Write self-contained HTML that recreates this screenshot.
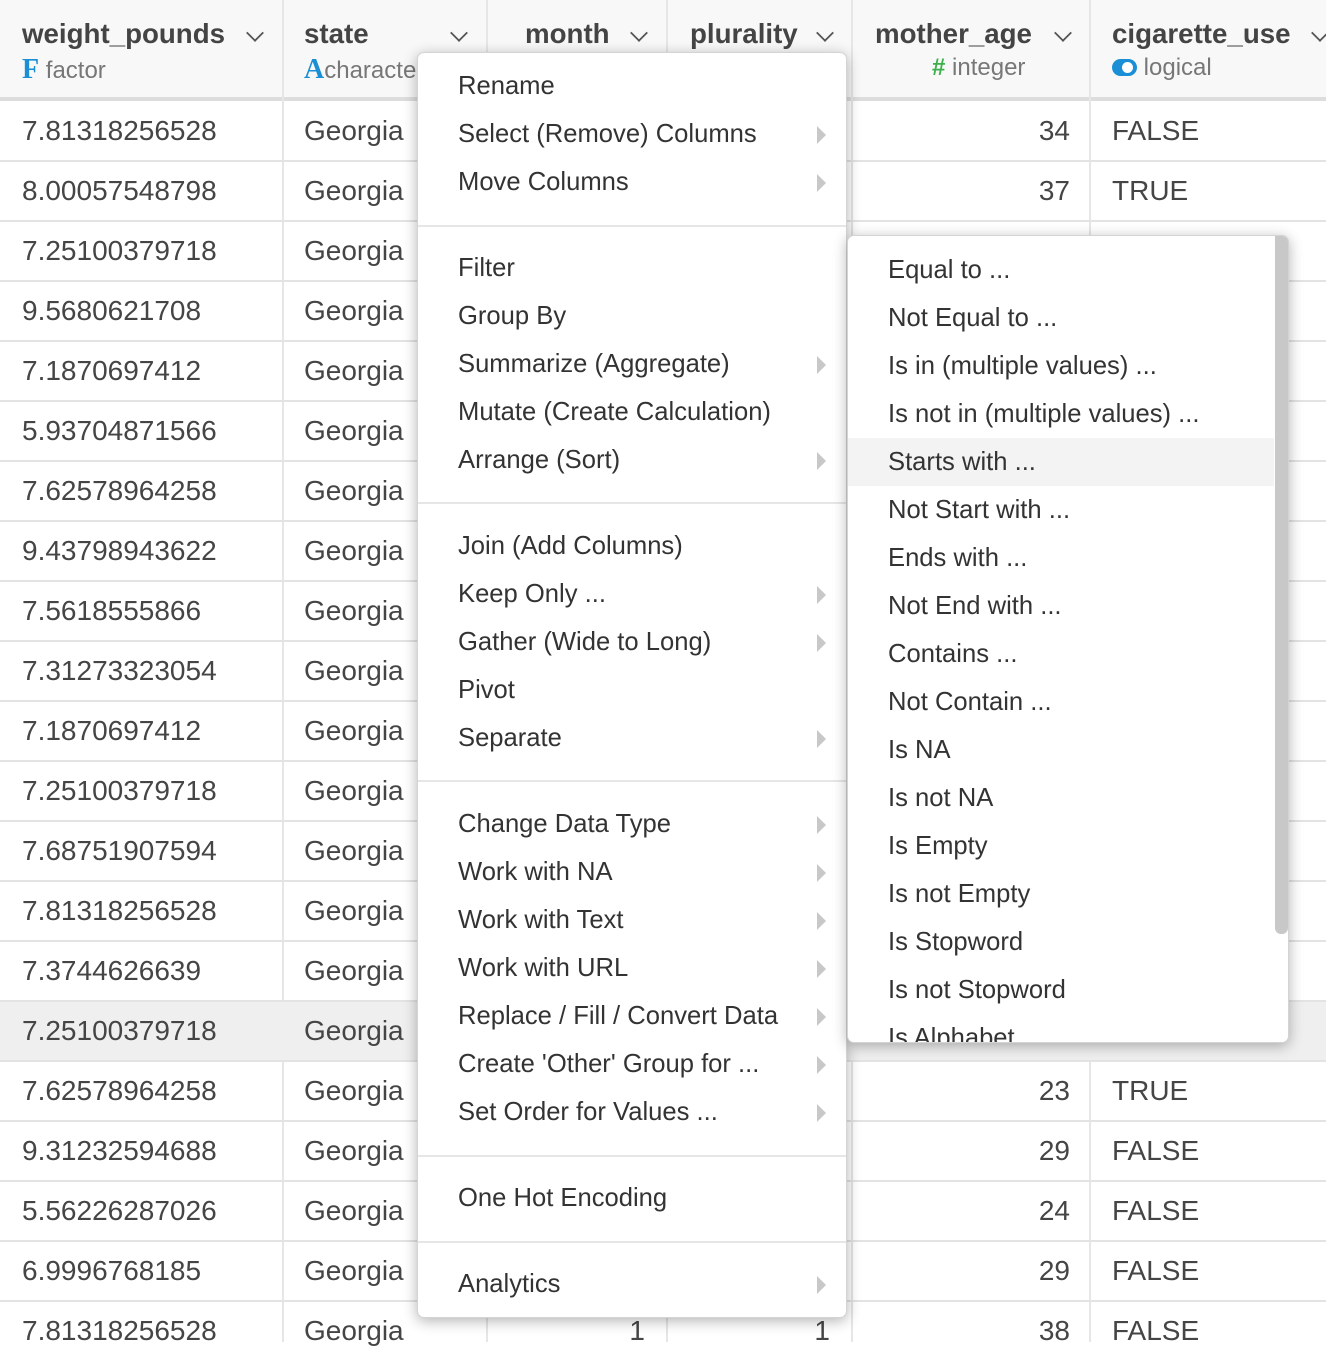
<!DOCTYPE html>
<html><head><meta charset="utf-8"><style>
*{margin:0;padding:0;box-sizing:border-box}
body{width:1326px;height:1342px;overflow:hidden;background:#fff;font-family:"Liberation Sans",Arial,sans-serif;position:relative;color:#444}
.a{position:absolute}
.hdr{position:absolute;top:0;left:0;width:1326px;height:101px;background:#f8f8f8;border-bottom:4px solid #ddd}
.vl{position:absolute;top:0;width:2px;height:1342px;background:#e6e6e6}
.hl{position:absolute;left:0;width:1326px;height:2px;background:#e3e3e3}
.cell{position:absolute;height:60px;line-height:60px;font-size:28px;color:#454545;white-space:nowrap}
.hn{position:absolute;top:18px;font-size:27.7px;font-weight:bold;color:#444;white-space:nowrap}
.ht{position:absolute;top:54px;font-size:24px;color:#777;white-space:nowrap}
.chev{position:absolute;top:26px;width:14px;height:14px;border-right:2px solid #555;border-bottom:2px solid #555;transform:rotate(45deg) scale(.9,.9);}
.menu{position:absolute;background:#fff;border-radius:7px;box-shadow:0 3px 14px rgba(0,0,0,.3);border:1px solid #d4d4d4}
.mi{position:absolute;left:40px;font-size:25.6px;color:#333;height:48px;line-height:48px;white-space:nowrap}
.ar{position:absolute;left:399px;width:0;height:0;border-top:9px solid transparent;border-bottom:9px solid transparent;border-left:9px solid #c8c8c8}
.sep{position:absolute;left:0;width:428px;height:2px;background:#e6e6e6}
.si{position:absolute;left:40px;font-size:25.6px;color:#333;height:48px;line-height:48px;white-space:nowrap}
</style></head><body>
<div class="hdr"></div>
<div class="vl" style="left:282px"></div>
<div class="vl" style="left:486px"></div>
<div class="vl" style="left:666px"></div>
<div class="vl" style="left:851px"></div>
<div class="vl" style="left:1089px"></div>

<div class="hn" style="left:22px">weight_pounds</div><div class="chev" style="left:248px"></div>
<div class="ht" style="left:22px"><b style="color:#1a8fd6;font-family:'Liberation Serif',serif;font-size:28px">F</b> factor</div>
<div class="hn" style="left:304px">state</div><div class="chev" style="left:452px"></div>
<div class="ht" style="left:304px"><b style="color:#1a8fd6;font-family:'Liberation Serif',serif;font-size:28px">A</b>character</div>
<div class="hn" style="left:525px">month</div><div class="chev" style="left:632px"></div>
<div class="hn" style="left:690px">plurality</div><div class="chev" style="left:818px"></div>
<div class="hn" style="left:875px">mother_age</div><div class="chev" style="left:1056px"></div>
<div class="ht" style="left:932px"><b style="color:#3cb04a">#</b> integer</div>
<div class="hn" style="left:1112px">cigarette_use</div><div class="chev" style="left:1313px"></div>
<div class="ht" style="left:1112px"><span style="display:inline-block;width:25px;height:17px;border-radius:9px;background:#1a8fd6;position:relative;vertical-align:-1px"><span style="position:absolute;left:10px;top:3px;width:11px;height:11px;border-radius:50%;background:#fff"></span></span> logical</div>

<div class="a" style="left:0;top:1001px;width:1326px;height:60px;background:#efefef"></div>

<div class="hl" style="top:160px"></div><div class="hl" style="top:220px"></div><div class="hl" style="top:280px"></div><div class="hl" style="top:340px"></div><div class="hl" style="top:400px"></div><div class="hl" style="top:460px"></div><div class="hl" style="top:520px"></div><div class="hl" style="top:580px"></div><div class="hl" style="top:640px"></div><div class="hl" style="top:700px"></div><div class="hl" style="top:760px"></div><div class="hl" style="top:820px"></div><div class="hl" style="top:880px"></div><div class="hl" style="top:940px"></div><div class="hl" style="top:1000px"></div><div class="hl" style="top:1060px"></div><div class="hl" style="top:1120px"></div><div class="hl" style="top:1180px"></div><div class="hl" style="top:1240px"></div><div class="hl" style="top:1300px"></div>

<div class="cell" style="left:22px;top:101px">7.81318256528</div>
<div class="cell" style="left:22px;top:161px">8.00057548798</div>
<div class="cell" style="left:22px;top:221px">7.25100379718</div>
<div class="cell" style="left:22px;top:281px">9.5680621708</div>
<div class="cell" style="left:22px;top:341px">7.1870697412</div>
<div class="cell" style="left:22px;top:401px">5.93704871566</div>
<div class="cell" style="left:22px;top:461px">7.62578964258</div>
<div class="cell" style="left:22px;top:521px">9.43798943622</div>
<div class="cell" style="left:22px;top:581px">7.5618555866</div>
<div class="cell" style="left:22px;top:641px">7.31273323054</div>
<div class="cell" style="left:22px;top:701px">7.1870697412</div>
<div class="cell" style="left:22px;top:761px">7.25100379718</div>
<div class="cell" style="left:22px;top:821px">7.68751907594</div>
<div class="cell" style="left:22px;top:881px">7.81318256528</div>
<div class="cell" style="left:22px;top:941px">7.3744626639</div>
<div class="cell" style="left:22px;top:1001px">7.25100379718</div>
<div class="cell" style="left:22px;top:1061px">7.62578964258</div>
<div class="cell" style="left:22px;top:1121px">9.31232594688</div>
<div class="cell" style="left:22px;top:1181px">5.56226287026</div>
<div class="cell" style="left:22px;top:1241px">6.9996768185</div>
<div class="cell" style="left:22px;top:1301px">7.81318256528</div>

<div class="cell" style="left:304px;top:101px">Georgia</div><div class="cell" style="left:304px;top:161px">Georgia</div><div class="cell" style="left:304px;top:221px">Georgia</div><div class="cell" style="left:304px;top:281px">Georgia</div><div class="cell" style="left:304px;top:341px">Georgia</div><div class="cell" style="left:304px;top:401px">Georgia</div><div class="cell" style="left:304px;top:461px">Georgia</div><div class="cell" style="left:304px;top:521px">Georgia</div><div class="cell" style="left:304px;top:581px">Georgia</div><div class="cell" style="left:304px;top:641px">Georgia</div><div class="cell" style="left:304px;top:701px">Georgia</div><div class="cell" style="left:304px;top:761px">Georgia</div><div class="cell" style="left:304px;top:821px">Georgia</div><div class="cell" style="left:304px;top:881px">Georgia</div><div class="cell" style="left:304px;top:941px">Georgia</div><div class="cell" style="left:304px;top:1001px">Georgia</div><div class="cell" style="left:304px;top:1061px">Georgia</div><div class="cell" style="left:304px;top:1121px">Georgia</div><div class="cell" style="left:304px;top:1181px">Georgia</div><div class="cell" style="left:304px;top:1241px">Georgia</div><div class="cell" style="left:304px;top:1301px">Georgia</div>

<div class="cell" style="left:600px;width:45px;text-align:right;top:1301px">1</div>
<div class="cell" style="left:790px;width:40px;text-align:right;top:1301px">1</div>

<div class="cell" style="left:1000px;width:70px;text-align:right;top:101px">34</div><div class="cell" style="left:1112px;top:101px">FALSE</div>
<div class="cell" style="left:1000px;width:70px;text-align:right;top:161px">37</div><div class="cell" style="left:1112px;top:161px">TRUE</div>
<div class="cell" style="left:1000px;width:70px;text-align:right;top:1061px">23</div><div class="cell" style="left:1112px;top:1061px">TRUE</div>
<div class="cell" style="left:1000px;width:70px;text-align:right;top:1121px">29</div><div class="cell" style="left:1112px;top:1121px">FALSE</div>
<div class="cell" style="left:1000px;width:70px;text-align:right;top:1181px">24</div><div class="cell" style="left:1112px;top:1181px">FALSE</div>
<div class="cell" style="left:1000px;width:70px;text-align:right;top:1241px">29</div><div class="cell" style="left:1112px;top:1241px">FALSE</div>
<div class="cell" style="left:1000px;width:70px;text-align:right;top:1301px">38</div><div class="cell" style="left:1112px;top:1301px">FALSE</div>

<div class="menu" style="left:417px;top:52px;width:430px;height:1266px">
<div class="mi" style="top:9px">Rename</div>
<div class="mi" style="top:57px">Select (Remove) Columns</div><div class="ar" style="top:73px"></div>
<div class="mi" style="top:105px">Move Columns</div><div class="ar" style="top:121px"></div>
<div class="sep" style="top:172px"></div>
<div class="mi" style="top:191px">Filter</div>
<div class="mi" style="top:239px">Group By</div>
<div class="mi" style="top:287px">Summarize (Aggregate)</div><div class="ar" style="top:303px"></div>
<div class="mi" style="top:335px">Mutate (Create Calculation)</div>
<div class="mi" style="top:383px">Arrange (Sort)</div><div class="ar" style="top:399px"></div>
<div class="sep" style="top:449px"></div>
<div class="mi" style="top:469px">Join (Add Columns)</div>
<div class="mi" style="top:517px">Keep Only ...</div><div class="ar" style="top:533px"></div>
<div class="mi" style="top:565px">Gather (Wide to Long)</div><div class="ar" style="top:581px"></div>
<div class="mi" style="top:613px">Pivot</div>
<div class="mi" style="top:661px">Separate</div><div class="ar" style="top:677px"></div>
<div class="sep" style="top:727px"></div>
<div class="mi" style="top:747px">Change Data Type</div><div class="ar" style="top:763px"></div>
<div class="mi" style="top:795px">Work with NA</div><div class="ar" style="top:811px"></div>
<div class="mi" style="top:843px">Work with Text</div><div class="ar" style="top:859px"></div>
<div class="mi" style="top:891px">Work with URL</div><div class="ar" style="top:907px"></div>
<div class="mi" style="top:939px">Replace / Fill / Convert Data</div><div class="ar" style="top:955px"></div>
<div class="mi" style="top:987px">Create 'Other' Group for ...</div><div class="ar" style="top:1003px"></div>
<div class="mi" style="top:1035px">Set Order for Values ...</div><div class="ar" style="top:1051px"></div>
<div class="sep" style="top:1102px"></div>
<div class="mi" style="top:1121px">One Hot Encoding</div>
<div class="sep" style="top:1188px"></div>
<div class="mi" style="top:1207px">Analytics</div><div class="ar" style="top:1223px"></div>
</div>

<div class="menu" style="left:847px;top:235px;width:442px;height:808px;overflow:hidden">
<div class="a" style="left:0;top:202px;width:426px;height:48px;background:#f3f3f3"></div>
<div class="a" style="left:427px;top:0;width:13px;height:698px;background:#c8c8c8;border-radius:0 0 6px 6px"></div>
<div class="si" style="top:10px">Equal to ...</div>
<div class="si" style="top:58px">Not Equal to ...</div>
<div class="si" style="top:106px">Is in (multiple values) ...</div>
<div class="si" style="top:154px">Is not in (multiple values) ...</div>
<div class="si" style="top:202px">Starts with ...</div>
<div class="si" style="top:250px">Not Start with ...</div>
<div class="si" style="top:298px">Ends with ...</div>
<div class="si" style="top:346px">Not End with ...</div>
<div class="si" style="top:394px">Contains ...</div>
<div class="si" style="top:442px">Not Contain ...</div>
<div class="si" style="top:490px">Is NA</div>
<div class="si" style="top:538px">Is not NA</div>
<div class="si" style="top:586px">Is Empty</div>
<div class="si" style="top:634px">Is not Empty</div>
<div class="si" style="top:682px">Is Stopword</div>
<div class="si" style="top:730px">Is not Stopword</div>
<div class="si" style="top:778px">Is Alphabet</div>
</div>
</body></html>
